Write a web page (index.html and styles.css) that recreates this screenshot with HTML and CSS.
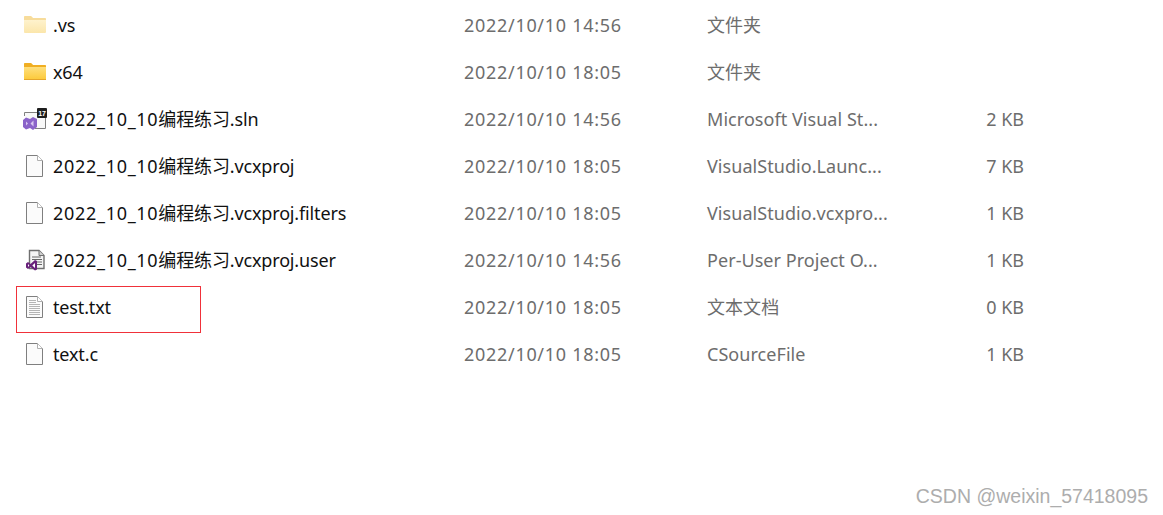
FILE: index.html
```html
<!DOCTYPE html>
<html lang="zh">
<head>
    <meta charset="UTF-8">
    <meta name="viewport" content="width=device-width, initial-scale=1.0">
    <title>文件列表</title>
    <link rel="stylesheet" href="styles.css">
</head>
<body>

    <svg class="defs" width="0" height="0">
        <defs>
            <linearGradient id="paleBody" x1="0" y1="0" x2="0" y2="1">
                <stop offset="0" stop-color="#fff6d8"/>
                <stop offset="1" stop-color="#fbe6ab"/>
            </linearGradient>
            <linearGradient id="goldBody" x1="0" y1="0" x2="0" y2="1">
                <stop offset="0" stop-color="#ffe692"/>
                <stop offset="1" stop-color="#fcc938"/>
            </linearGradient>
            <path id="folder" d="M1 4 V2 Q1 1 2 1 H8 L10 3 H22 Q23 3 23 4 V17 Q23 18 22 18 H2 Q1 18 1 17 Z"/>
            <path id="folderTop" d="M1 2 Q1 1 2 1 H8 L10 3 H22 Q23 3 23 4 V5 H8 L1 5 Z"/>
            <g id="page">
                <path d="M0.5 0.5 H11.5 L16.5 5.5 V21.5 H0.5 Z" fill="#fbfbfb" stroke="#7f7f7f"/>
                <path d="M11.5 0.5 V5.5 H16.5" fill="#fff" stroke="#b0b0b0"/>
            </g>
        </defs>
    </svg>

    <div class="list">
        <div class="row">
            <div class="name">
                <svg class="icon" width="24" height="20" viewBox="0 0 24 20">
                    <use href="#folder" fill="url(#paleBody)"/>
                    <use href="#folderTop" fill="#f7dc9b"/>
                </svg>
                <span>.vs</span>
            </div>
            <div class="date">2022/10/10 14:56</div>
            <div class="type cjk">文件夹</div>
            <div class="size"></div>
        </div>

        <div class="row">
            <div class="name">
                <svg class="icon" width="24" height="20" viewBox="0 0 24 20">
                    <use href="#folder" fill="url(#goldBody)"/>
                    <use href="#folderTop" fill="#f0ae22"/>
                    <path d="M1 17.5 H23" stroke="#e5a52a"/>
                </svg>
                <span>x64</span>
            </div>
            <div class="date">2022/10/10 18:05</div>
            <div class="type cjk">文件夹</div>
            <div class="size"></div>
        </div>

        <div class="row">
            <div class="name">
                <svg class="icon" width="26" height="24" viewBox="0 0 26 24">
                    <path d="M1.5 9 V5.5 H22.5 V21.5 H12" fill="#f8f8f8" stroke="#808080"/>
                    <rect x="14" y="1" width="10" height="10" rx="1" fill="#1e1e1e"/>
                    <text class="badge-num" x="19" y="8.5" text-anchor="middle">17</text>
                    <path d="M0 13 L3 10.5 L7 12 L10 10 L14 12 V20 L10 23 L7 21 L3 22.5 L0 20 Z" fill="#8a63c9"/>
                    <path d="M3 14.5 L5 16.5 L3 18.5 Z M10.5 13.5 V19.5 L7.5 16.5 Z" fill="#d9c8f0"/>
                </svg>
                <span class="cjk"><span class="num">2022_10_10</span>编程练习.sln</span>
            </div>
            <div class="date">2022/10/10 14:56</div>
            <div class="type">Microsoft Visual St...</div>
            <div class="size">2 KB</div>
        </div>

        <div class="row">
            <div class="name">
                <svg class="icon icon-page" width="17" height="22" viewBox="0 0 17 22"><use href="#page"/></svg>
                <span class="cjk"><span class="num">2022_10_10</span>编程练习.vcxproj</span>
            </div>
            <div class="date">2022/10/10 18:05</div>
            <div class="type">VisualStudio.Launc...</div>
            <div class="size">7 KB</div>
        </div>

        <div class="row">
            <div class="name">
                <svg class="icon icon-page" width="17" height="22" viewBox="0 0 17 22"><use href="#page"/></svg>
                <span class="cjk"><span class="num">2022_10_10</span>编程练习.vcxproj.filters</span>
            </div>
            <div class="date">2022/10/10 18:05</div>
            <div class="type">VisualStudio.vcxpro...</div>
            <div class="size">1 KB</div>
        </div>

        <div class="row">
            <div class="name">
                <svg class="icon" width="26" height="24" viewBox="0 0 26 24">
                    <path d="M6.5 2.5 H16 L21 7.5 V20.5 H6.5 Z" fill="#f4f4f4" stroke="#6f6f6f" stroke-width="1.4"/>
                    <path d="M16 2.5 V7.5 H21" fill="#cfcfcf" stroke="#6f6f6f"/>
                    <path d="M9 9 H18 M9 11.5 H19 M12 14 H19 M12 16.5 H19" stroke="#666" stroke-width="1.2"/>
                    <path d="M3 15.5 L5 14 L7.5 16 L12 12 L14 13 V21.5 L12 22.5 L7.5 19 L5 21 L3 19.5 Z" fill="#68217a"/>
                    <path d="M5 16 L6.3 17.5 L5 19 Z M12 15 V20 L9.3 17.5 Z" fill="#fff"/>
                </svg>
                <span class="cjk"><span class="num">2022_10_10</span>编程练习.vcxproj.user</span>
            </div>
            <div class="date">2022/10/10 14:56</div>
            <div class="type">Per-User Project O...</div>
            <div class="size">1 KB</div>
        </div>

        <div class="row">
            <div class="name">
                <!-- 红框 -->
                <div class="mark"></div>
                <svg class="icon icon-page" width="17" height="22" viewBox="0 0 17 22">
                    <use href="#page"/>
                    <path d="M3 4.5 H10 M3 6.5 H10 M3 8.5 H14 M3 10.5 H14 M3 12.5 H14 M3 14.5 H14 M3 16.5 H14 M3 18.5 H14" stroke="#b4b4b4"/>
                </svg>
                <span>test.txt</span>
            </div>
            <div class="date">2022/10/10 18:05</div>
            <div class="type cjk">文本文档</div>
            <div class="size">0 KB</div>
        </div>

        <div class="row">
            <div class="name">
                <svg class="icon icon-page" width="17" height="22" viewBox="0 0 17 22"><use href="#page"/></svg>
                <span>text.c</span>
            </div>
            <div class="date">2022/10/10 18:05</div>
            <div class="type">CSourceFile</div>
            <div class="size">1 KB</div>
        </div>
    </div>

    <!-- 水印 -->
    <div class="watermark">CSDN @weixin_57418095</div>

</body>
</html>
```

FILE: styles.css
```css
body {
    margin: 0;
    padding: 1px 0 0;
    height: 514px;
    background-color: #fff;
    position: relative;
    overflow: hidden;
    font-family: "Noto Sans", "Noto Sans CJK SC", sans-serif;
}

.defs {
    display: block;
    height: 0;
}

/* 文件行 */
.row {
    display: grid;
    grid-template-columns: 464px 243px 258px 59px;
    height: 47px;
    align-items: center;
    font-size: 18px;
    white-space: nowrap;
}

.name {
    display: flex;
    align-items: center;
    height: 100%;
    padding-left: 53px;
    color: #111;
    letter-spacing: -0.15px;
    position: relative;
}

/* 含中文的文字行高更大，往上收一点 */
.cjk {
    padding-bottom: 2px;
}

.num {
    letter-spacing: 0.7px;
}

.icon {
    position: absolute;
    left: 23px;
    top: 50%;
    transform: translateY(-50%);
}

.icon-page {
    left: 26px;
}

.date,
.type,
.size {
    color: #6d6d6d;
}

.date {
    letter-spacing: 0.7px;
}

.type {
    letter-spacing: 0.05px;
}

.size {
    text-align: right;
}

.badge-num {
    font-family: "Liberation Sans", sans-serif;
    font-size: 7px;
    font-weight: bold;
    fill: #fff;
}

/* 红框 */
.mark {
    position: absolute;
    left: 16px;
    top: 3px;
    width: 183px;
    height: 45px;
    border: 1px solid #f0313a;
}

/* 水印 */
.watermark {
    position: absolute;
    right: 15px;
    bottom: 7px;
    font-family: "Liberation Sans", sans-serif;
    font-size: 19.5px;
    color: #adadad;
}
```
